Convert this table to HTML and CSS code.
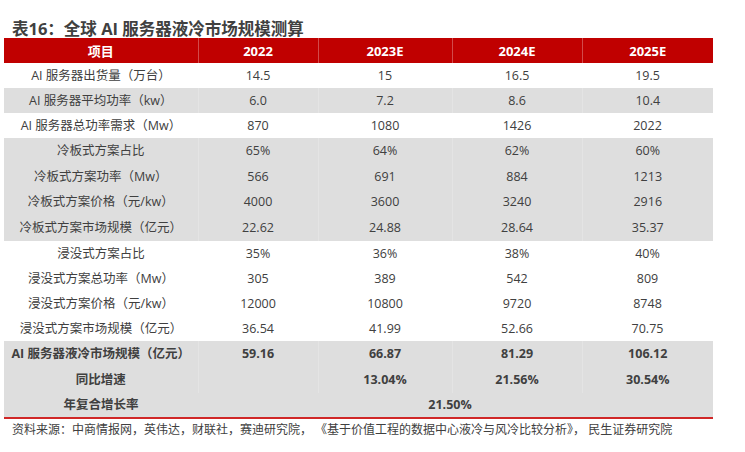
FILE: index.html
```html
<!DOCTYPE html>
<html lang="zh">
<head>
<meta charset="utf-8">
<link rel="stylesheet" href="styles.css">
</head>
<body>
<div class="page">
  <h1 class="title">表16：全球 AI 服务器液冷市场规模测算</h1>
  <table class="tbl">
    <colgroup>
      <col class="c1"><col class="c2"><col class="c3"><col class="c4"><col class="c5">
    </colgroup>
    <thead>
      <tr class="head"><th>项目</th><th>2022</th><th>2023E</th><th>2024E</th><th>2025E</th></tr>
    </thead>
    <tbody>
      <tr><td>AI 服务器出货量（万台）</td><td>14.5</td><td>15</td><td>16.5</td><td>19.5</td></tr>
      <tr class="grey"><td>AI 服务器平均功率（kw）</td><td>6.0</td><td>7.2</td><td>8.6</td><td>10.4</td></tr>
      <tr><td>AI 服务器总功率需求（Mw）</td><td>870</td><td>1080</td><td>1426</td><td>2022</td></tr>
      <tr class="grey tall"><td>冷板式方案占比</td><td>65%</td><td>64%</td><td>62%</td><td>60%</td></tr>
      <tr class="grey"><td>冷板式方案功率（Mw）</td><td>566</td><td>691</td><td>884</td><td>1213</td></tr>
      <tr class="grey tall"><td>冷板式方案价格（元/kw）</td><td>4000</td><td>3600</td><td>3240</td><td>2916</td></tr>
      <tr class="grey tall"><td>冷板式方案市场规模（亿元）</td><td>22.62</td><td>24.88</td><td>28.64</td><td>35.37</td></tr>
      <tr><td>浸没式方案占比</td><td>35%</td><td>36%</td><td>38%</td><td>40%</td></tr>
      <tr><td>浸没式方案总功率（Mw）</td><td>305</td><td>389</td><td>542</td><td>809</td></tr>
      <tr><td>浸没式方案价格（元/kw）</td><td>12000</td><td>10800</td><td>9720</td><td>8748</td></tr>
      <tr><td>浸没式方案市场规模（亿元）</td><td>36.54</td><td>41.99</td><td>52.66</td><td>70.75</td></tr>
      <tr class="grey bold tall"><td>AI 服务器液冷市场规模（亿元）</td><td>59.16</td><td>66.87</td><td>81.29</td><td>106.12</td></tr>
      <tr class="grey bold tall"><td>同比增速</td><td></td><td>13.04%</td><td>21.56%</td><td>30.54%</td></tr>
      <tr class="grey bold last"><td>年复合增长率</td><td></td><td colspan="2">21.50%</td><td></td></tr>
    </tbody>
  </table>
  <p class="source">资料来源：中商情报网，英伟达，财联社，赛迪研究院， 《基于价值工程的数据中心液冷与风冷比较分析》， 民生证券研究院</p>
</div>
</body>
</html>
```

FILE: styles.css
```css
html, body {
  margin: 0;
  padding: 0;
  background: #ffffff;
}
.page {
  width: 745px;
  height: 452px;
  font-family: "Open Sans", "Noto Sans CJK SC", sans-serif;
  color: #404040;
}
.title {
  margin: 0;
  padding: 19px 0 0 12px;
  height: 19px;
  font-size: 16.5px;
  line-height: 19px;
  font-weight: bold;
  color: #404040;
  font-family: "Open Sans", "Noto Sans CJK SC", sans-serif;
}
.tbl {
  margin-left: 4px;
  width: 709px;
  table-layout: fixed;
  border-collapse: collapse;
  border-spacing: 0;
}
.c1 { width: 194px; }
.c2 { width: 120px; }
.c3 { width: 134px; }
.c4 { width: 130px; }
.c5 { width: 131px; }
.tbl th, .tbl td {
  height: 25px;
  padding: 0;
  text-align: center;
  vertical-align: middle;
  font-size: 12.5px;
  line-height: 16px;
  white-space: nowrap;
}
.tall td { height: 26px; }
.head th {
  background: #c00000;
  color: #ffffff;
  font-weight: bold;
  font-size: 13px;
  border-left: 1px solid #d24a4a;
}
.head th:first-child { border-left: none; }
.tbl td { color: #404040; }
.grey td {
  background: #dedede;
  border-left: 1px solid #e4e4e4;
}
.grey td:first-child { border-left: none; }
.bold td { font-weight: bold; }
.last td {
  height: 24px;
  border-bottom: 2px solid #d02828;
  border-left: none;
}
.source {
  margin: 3px 0 0 12px;
  font-size: 12px;
  line-height: 16px;
  color: #404040;
}
```
